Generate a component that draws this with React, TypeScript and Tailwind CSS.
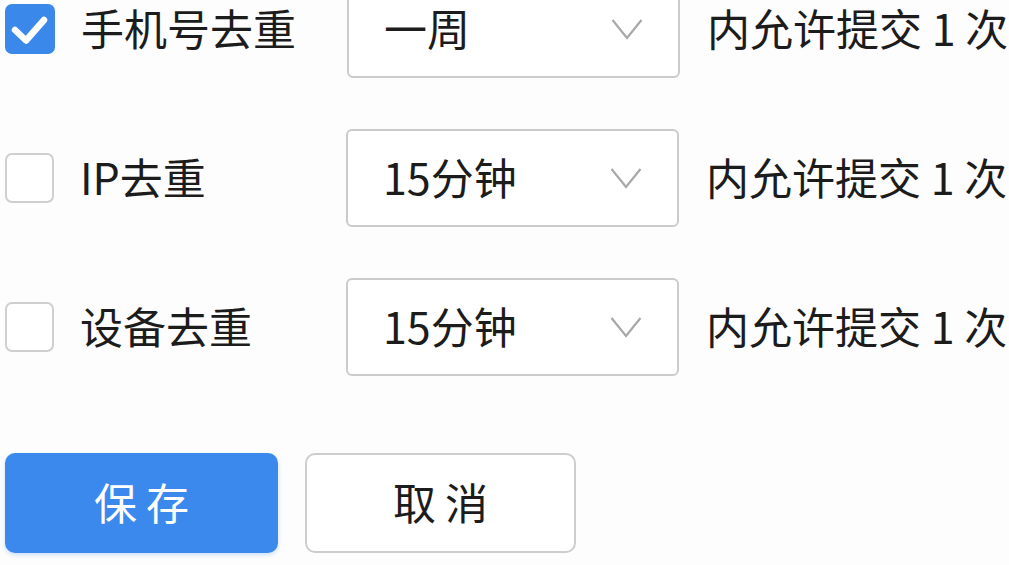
import React from "react";

const font = { fontFamily: '"Noto Sans CJK SC", "Noto Sans", sans-serif' };

function Checkbox({ checked }: { checked: boolean }) {
  if (checked) {
    return (
      <div className="w-[50px] h-[50px] rounded-[7px] bg-[#3a88ea] flex items-center justify-center shrink-0">
        <svg width="50" height="50" viewBox="0 0 50 50">
          <path d="M10 26 L21 36.5 L39 16" fill="none" stroke="#ffffff" strokeWidth="6.5" strokeLinecap="round" strokeLinejoin="round" />
        </svg>
      </div>
    );
  }
  return <div className="w-[49px] h-[50px] rounded-[7px] border-2 border-[#cfcfcf] bg-white shrink-0" />;
}

function Chevron() {
  return (
    <svg width="32" height="22" viewBox="0 0 32 22" className="shrink-0">
      <path d="M1.5 2 L16 20 L30.5 2" fill="none" stroke="#a8a8a8" strokeWidth="2.2" />
    </svg>
  );
}

function Row({ checked, label, value, first }: { checked: boolean; label: string; value: string; first?: boolean }) {
  return (
    <div className={`flex items-center h-[98px] ${first ? "-mt-[20px]" : ""}`}>
      <Checkbox checked={checked} />
      <div className="w-[266px] ml-[26px] pb-[4px] text-[43px] text-[#1c1c1c] leading-none whitespace-nowrap">{label}</div>
      <div className="w-[333px] h-[98px] border-2 border-[#cbcbcb] rounded-[6px] bg-white flex items-center justify-between pl-[35px] pr-[35px]">
        <span className="pb-[4px] text-[43px] text-[#1c1c1c] leading-none whitespace-nowrap">{value}</span>
        <Chevron />
      </div>
      <div className="ml-[27px] pb-[4px] text-[43px] text-[#1c1c1c] leading-none whitespace-nowrap">内允许提交 1 次</div>
    </div>
  );
}

export default function App() {
  return (
    <div className="w-[1009px] h-[565px] bg-[#fdfdfd] overflow-hidden" style={font}>
      <div className="pl-[5px] flex flex-col">
        <div className="flex flex-col gap-[51px]">
          <Row first checked label="手机号去重" value="一周" />
          <Row checked={false} label="IP去重" value="15分钟" />
          <Row checked={false} label="设备去重" value="15分钟" />
        </div>
        <div className="flex gap-[27px] mt-[77px]">
          <button className="w-[273px] h-[100px] rounded-[10px] bg-[#3b89ec] text-white text-[43px] tracking-[9px] pl-[9px] pb-[3px] flex items-center justify-center shadow-[0_2px_4px_rgba(59,137,236,0.25)]">
            保存
          </button>
          <button className="w-[271px] h-[100px] rounded-[10px] border-2 border-[#cdcdcd] bg-white text-[#1c1c1c] text-[43px] tracking-[9px] pl-[9px] pb-[3px] flex items-center justify-center">
            取消
          </button>
        </div>
      </div>
    </div>
  );
}
